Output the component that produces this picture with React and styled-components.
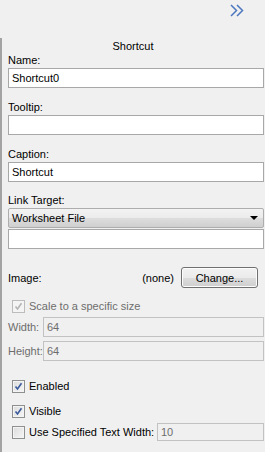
import React from "react"
import styled, { createGlobalStyle } from "styled-components"

const GlobalStyle = createGlobalStyle`
  html, body {
    margin: 0;
    padding: 0;
    background: #f0f0f0;
  }
  body {
    font-family: "Liberation Sans", Arial, sans-serif;
    font-size: 11px;
    color: #000;
  }
`

const Page = styled.div`
  width: 265px;
  height: 452px;
  display: flex;
  flex-direction: column;
  background: #f0f0f0;
  overflow: hidden;
`
const TopBar = styled.div`
  height: 38px;
  display: flex;
  justify-content: flex-end;
  align-items: flex-start;
  padding: 4px 20px 0 0;
  box-sizing: border-box;
`
const Panel = styled.div`
  flex: 1;
  display: flex;
  flex-direction: column;
  border-left: 2px solid #a3a3a3;
  padding: 0 1px 0 6px;
`
const Title = styled.div`
  text-align: center;
  line-height: 13px;
  margin-top: 2px;
  padding-right: 6px;
`
const Label = styled.div`
  line-height: 13px;
  margin-top: ${({ $top }) => $top || 0}px;
  color: ${({ $disabled }) => ($disabled ? "#6d6d6d" : "#000")};
`
const Input = styled.div`
  height: ${({ $h }) => $h || 20}px;
  width: ${({ $w }) => ($w ? `${$w}px` : "auto")};
  box-sizing: border-box;
  margin-top: ${({ $top }) => ($top === undefined ? 1 : $top)}px;
  border: 1px solid ${({ $disabled }) => ($disabled ? "#c2c2c2" : "#a8a8a8")};
  background: ${({ $disabled }) => ($disabled ? "#f0f0f0" : "#fff")};
  color: ${({ $disabled }) => ($disabled ? "#6d6d6d" : "#000")};
  padding: 0 3px;
  display: flex;
  align-items: center;
  flex: ${({ $grow }) => ($grow ? 1 : "none")};
`
const Select = styled.div`
  height: 20px;
  box-sizing: border-box;
  margin-top: 1px;
  border: 1px solid #adadad;
  border-radius: 2px;
  background: linear-gradient(#f3f3f3 0%, #ebebeb 50%, #dddddd 51%, #cfcfcf 100%);
  display: flex;
  align-items: center;
  justify-content: space-between;
  padding: 0 5px 0 3px;
`
const Arrow = styled.span`
  width: 0;
  height: 0;
  border-left: 4px solid transparent;
  border-right: 4px solid transparent;
  border-top: 4px solid #000;
`
const Row = styled.div`
  display: flex;
  align-items: center;
  margin-top: ${({ $top }) => $top || 0}px;
  height: ${({ $h }) => $h || 14}px;
`
const Spacer = styled.div`
  flex: 1;
`
const None = styled.span`
  margin-right: 7px;
`
const Button = styled.div`
  width: 77px;
  height: 21px;
  box-sizing: border-box;
  border: 1px solid #707070;
  border-radius: 3px;
  background: linear-gradient(#f2f2f2 0%, #ebebeb 50%, #dddddd 51%, #cfcfcf 100%);
  display: flex;
  align-items: center;
  justify-content: center;
  margin-right: 6px;
  box-shadow: inset 0 0 0 1px #fcfcfc;
`
const InlineLabel = styled.span`
  width: ${({ $w }) => $w}px;
  flex: none;
  color: ${({ $disabled }) => ($disabled ? "#6d6d6d" : "#000")};
`
const CheckRow = styled.label`
  display: flex;
  align-items: center;
  gap: 4px;
  padding-left: 4px;
  height: 14px;
  margin-top: ${({ $top }) => $top || 0}px;
  color: ${({ $disabled }) => ($disabled ? "#6d6d6d" : "#000")};
`
const Box = styled.span`
  width: 13px;
  height: 13px;
  box-sizing: border-box;
  flex: none;
  border: 1px solid ${({ $disabled }) => ($disabled ? "#bcbcbc" : "#8e8f8f")};
  background: ${({ $disabled }) =>
    $disabled ? "#f4f4f4" : "linear-gradient(135deg, #dcdcdc 0%, #f6f6f6 100%)"};
  box-shadow: inset 0 0 0 1px #f4f4f4;
  display: flex;
  align-items: center;
  justify-content: center;
`

const Chevron = () => (
  <svg width="15" height="13" viewBox="0 0 15 13">
    <path d="M1 1 L6.5 6.5 L1 12 M7 1 L12.5 6.5 L7 12" fill="none" stroke="#4d78c0" strokeWidth="1.5" />
  </svg>
)

const Check = ({ disabled }) => (
  <svg width="9" height="9" viewBox="0 0 9 9">
    <path
      d="M1.5 4.5 L3.5 7 L7.5 1.2"
      fill="none"
      stroke={disabled ? "#b4b4b4" : "#3b5a9c"}
      strokeWidth="1.6"
    />
  </svg>
)

const CheckBox = ({ checked, disabled }) => (
  <Box $disabled={disabled}>{checked && <Check disabled={disabled} />}</Box>
)

const App = () => {
  return (
    <Page>
      <GlobalStyle />
      <TopBar>
        <Chevron />
      </TopBar>
      <Panel>
        <Title>Shortcut</Title>

        <Label $top={1}>Name:</Label>
        <Input>Shortcut0</Input>

        <Label $top={13}>Tooltip:</Label>
        <Input />

        <Label $top={13}>Caption:</Label>
        <Input>Shortcut</Input>

        <Label $top={12}>Link Target:</Label>
        <Select>
          Worksheet File
          <Arrow />
        </Select>
        <Input />

        <Row $top={18} $h={21}>
          <span>Image:</span>
          <Spacer />
          <None>(none)</None>
          <Button>Change...</Button>
        </Row>

        <CheckRow $top={11} $disabled>
          <CheckBox checked disabled />
          Scale to a specific size
        </CheckRow>

        <Row $top={4} $h={20}>
          <InlineLabel $w={35} $disabled>Width:</InlineLabel>
          <Input $disabled $grow $top={0}>64</Input>
        </Row>
        <Row $top={4} $h={20}>
          <InlineLabel $w={35} $disabled>Height:</InlineLabel>
          <Input $disabled $grow $top={0}>64</Input>
        </Row>

        <CheckRow $top={18}>
          <CheckBox checked />
          Enabled
        </CheckRow>
        <CheckRow $top={11}>
          <CheckBox checked />
          Visible
        </CheckRow>
        <Row $top={5} $h={18}>
          <CheckRow>
            <CheckBox />
            Use Specified Text Width:
          </CheckRow>
          <Spacer />
          <Input $disabled $top={0} $w={107} $h={18}>10</Input>
        </Row>
      </Panel>
    </Page>
  )
}

export default App
